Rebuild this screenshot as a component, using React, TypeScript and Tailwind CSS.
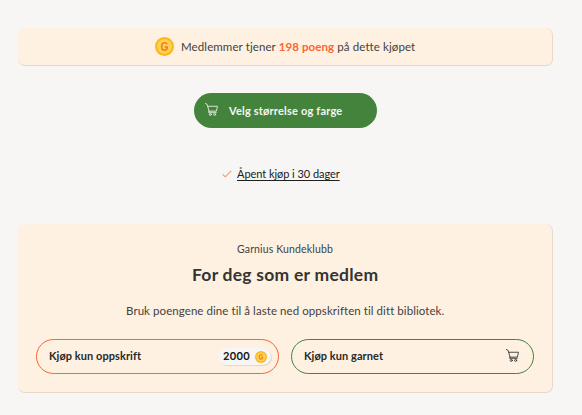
import type { ReactNode } from "react";

function Coin({ className }: { className: string }) {
  return (
    <svg viewBox="0 0 20 20" className={className} fill="none" aria-hidden="true">
      <circle cx="10" cy="10" r="10" fill="#fcb815" />
      <circle cx="10" cy="10" r="7.7" fill="#ffd255" />
      <path d="M12.7 7.6C12.2 6.5 11.2 6.1 10.1 6.1C8.1 6.1 7 7.7 7 10C7 12.3 8.1 13.9 10.1 13.9C11.9 13.9 12.9 12.6 12.9 10.5H10.2" stroke="#f47b20" strokeWidth="1.7" />
    </svg>
  );
}

function Cart({ className }: { className: string }) {
  return (
    <svg viewBox="0 0 12 12" className={className} fill="none" stroke="currentColor" strokeWidth="0.75" strokeLinecap="round" strokeLinejoin="round" aria-hidden="true">
      <path d="M0.4 0.5L1.7 1L2.5 3H11.5L10.5 7.5H3.7L2.5 3M3.7 7.5L3.2 8.6H10.4" />
      <circle cx="4.9" cy="10.5" r="0.95" />
      <circle cx="8.9" cy="10.5" r="0.95" />
    </svg>
  );
}

function Panel({ className, children }: { className: string; children: ReactNode }) {
  return (
    <section className={`mx-auto w-[535px] rounded-[7px] border-r border-b border-[#e5d9cc] bg-[#fef1e1] ${className}`}>
      {children}
    </section>
  );
}

export default function App() {
  return (
    <main className="flex h-[415px] w-[582px] flex-col overflow-hidden bg-[#f7f6f4] pt-7 pr-[11px] font-['Lato','Liberation_Sans',sans-serif] whitespace-nowrap text-[#424240] [font-variant-ligatures:none]">
      <Panel className="flex h-[38px] shrink-0 items-center pl-[137px]">
        <Coin className="size-[19px] shrink-0" />
        <p className="ml-[7px] text-[11.5px] leading-4 tracking-[0.1px]">
          Medlemmer tjener <span className="font-bold text-[#fb6530]">198 poeng</span> på dette kjøpet
        </p>
      </Panel>

      <button className="mt-[27px] ml-[194px] flex h-[35px] w-[183px] shrink-0 items-center rounded-full bg-[#43833b] pl-[11px] text-[#f7f6f4]">
        <Cart className="-mt-0.5 size-[13px] shrink-0" />
        <span className="ml-[11px] text-[11px] leading-4 font-bold tracking-[0.19px]">Velg størrelse og farge</span>
      </button>

      <div className="mt-[38px] ml-[222px] flex h-4 shrink-0 items-center">
        <svg viewBox="0 0 10 8" className="h-2 w-[10px] shrink-0" fill="none" stroke="#fb9669" strokeWidth="1.1">
          <path d="M0.7 4.3L3.3 6.8L9.2 0.8" />
        </svg>
        <a className="ml-[5px] text-[11px] leading-4 tracking-[-0.05px] text-[#20201e] underline decoration-1 underline-offset-2">Åpent kjøp i 30 dager</a>
      </div>

      <Panel className="mt-[42px] flex h-[169px] shrink-0 flex-col px-[18px] pt-[17px]">
        <p className="ml-[201px] text-[10.5px] leading-4 tracking-[0.14px]">Garnius Kundeklubb</p>
        <h2 className="mt-1.5 ml-[156px] text-[17.5px] leading-6 font-bold tracking-[0.25px] text-[#343432]">For deg som er medlem</h2>
        <p className="mt-4 ml-[90px] text-[11.5px] leading-4 tracking-[0.07px]">Bruk poengene dine til å laste ned oppskriften til ditt bibliotek.</p>
        <div className="mt-5 flex gap-3 text-[11px] font-bold tracking-[0.06px] text-[#292927]">
          <button className="flex h-[35px] w-[243px] shrink-0 items-center justify-between rounded-full border border-[#fb6530] pr-[7px] pl-3">
            <span>Kjøp kun oppskrift</span>
            <span className="flex h-[17px] w-[53px] items-center justify-between rounded-full bg-[#f7f6f4] pr-[3px] pl-[5px] text-[#20201e] shadow-[1px_1px_1px_#ded7ce]">
              <span className="font-['Inter'] text-[10.5px] font-semibold tracking-[-0.1px]">2000</span>
              <Coin className="mr-px size-3" />
            </span>
          </button>
          <button className="flex h-[35px] w-[243px] shrink-0 items-center justify-between rounded-full border border-[#43833b] pr-[14px] pl-3">
            <span>Kjøp kun garnet</span>
            <Cart className="-mt-[3px] size-[13px]" />
          </button>
        </div>
      </Panel>
    </main>
  );
}
